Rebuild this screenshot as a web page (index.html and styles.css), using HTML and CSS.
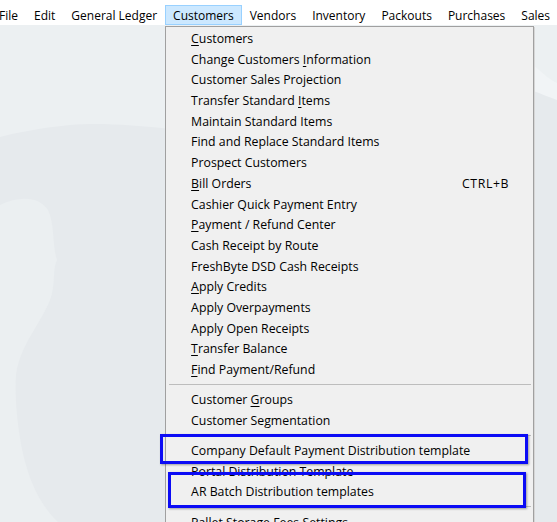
FILE: index.html
```html
<!DOCTYPE html>
<html>
<head>
<meta charset="utf-8">
<link rel="stylesheet" href="styles.css">
</head>
<body>
<div class="app">
  <nav class="menubar">
    <div class="mitem">File</div>
    <div class="mitem">Edit</div>
    <div class="mitem">General Ledger</div>
    <div class="mitem open">Customers
      <div class="dropdown">
        <div class="row"><span><u>C</u>ustomers</span></div>
        <div class="row"><span>Change Customers <u>I</u>nformation</span></div>
        <div class="row"><span>Customer Sales Projection</span></div>
        <div class="row"><span>Transfer Standard <u>I</u>tems</span></div>
        <div class="row"><span>Maintain Standard Items</span></div>
        <div class="row"><span>Find and Replace Standard Items</span></div>
        <div class="row"><span>Prospect Customers</span></div>
        <div class="row"><span><u>B</u>ill Orders</span><span class="key">CTRL+B</span></div>
        <div class="row"><span>Cashier Quick Payment Entry</span></div>
        <div class="row"><span><u>P</u>ayment / Refund Center</span></div>
        <div class="row"><span>Cash Receipt by Route</span></div>
        <div class="row"><span>FreshByte DSD Cash Receipts</span></div>
        <div class="row"><span><u>A</u>pply Credits</span></div>
        <div class="row"><span>Apply Overpayments</span></div>
        <div class="row"><span>Apply Open Receipts</span></div>
        <div class="row"><span><u>T</u>ransfer Balance</span></div>
        <div class="row"><span><u>F</u>ind Payment/Refund</span></div>
        <div class="sep"></div>
        <div class="row"><span>Customer <u>G</u>roups</span></div>
        <div class="row"><span>Customer Segmentation</span></div>
        <div class="sep"></div>
        <div class="row mark-a"><span>Company Default Payment Distribution template</span></div>
        <div class="row"><span>Portal Distribution Template</span></div>
        <div class="row mark-b"><span>AR Batch Distribution templates</span></div>
        <div class="sep"></div>
        <div class="row"><span>Pallet Storage Fees Settings</span></div>
      </div>
    </div>
    <div class="mitem">Vendors</div>
    <div class="mitem">Inventory</div>
    <div class="mitem">Packouts</div>
    <div class="mitem">Purchases</div>
    <div class="mitem">Sales</div>
  </nav>
  <div class="desktop">
    <svg class="art" viewBox="0 0 557 497" preserveAspectRatio="none" xmlns="http://www.w3.org/2000/svg">
      <rect x="0" y="0" width="557" height="497" fill="#e6eaed"/>
      <path d="M0 0 H557 V60 C520 70 490 80 460 90 C400 110 330 120 270 115 C200 108 120 95 70 100 C40 103 15 108 0 112 Z" fill="#ecf0f2"/>
      <path d="M0 180 C20 170 40 172 48 185 C55 200 52 220 57 235 C52 245 56 260 50 275 C40 300 20 320 16 350 C14 380 20 420 26 440 C34 470 50 490 58 497 H0 Z" fill="#ebeff1"/>
      <path d="M533 40 C545 50 550 55 557 58 V75 C548 72 540 68 533 66 Z" fill="#f1f4f6"/>
    </svg>
  </div>
</div>
</body>
</html>
```
FILE: styles.css
```css
html, body {
  margin: 0;
  padding: 0;
}
body {
  width: 557px;
  height: 522px;
  overflow: hidden;
  font-family: "Open Sans", "Noto Sans", sans-serif;
  font-size: 12px;
  color: #000;
  background: #e6eaed;
}
.app {
  display: flex;
  flex-direction: column;
  height: 522px;
}
.menubar {
  display: flex;
  height: 25px;
  padding-top: 5px;
  box-sizing: border-box;
  margin-left: -9px;
  background: #fff;
  position: relative;
  z-index: 2;
  white-space: nowrap;
}
.mitem {
  height: 20px;
  box-sizing: border-box;
  padding: 1px 8px 0 8px;
  line-height: 19px;
}
.mitem.open {
  position: relative;
  background: #cce8ff;
  box-shadow: inset 0 0 0 1px #99d1ff;
}
.dropdown {
  position: absolute;
  top: calc(100% + 1px);
  left: 0;
  width: 369px;
  box-sizing: border-box;
  background: #f0f0f0;
  border: 1px solid #a0a0a0;
  box-shadow: 1px 1px 0 #d6d6d6;
  padding-top: 2px;
  padding-bottom: 4px;
  font-size: 12.3px;
}
.row {
  position: relative;
  display: flex;
  justify-content: space-between;
  height: 20.7px;
  line-height: 20.7px;
  padding: 0 24px 0 25px;
}
.key {
  letter-spacing: 0.6px;
}
.row u {
  text-decoration-thickness: 1px;
  text-underline-offset: 2px;
}
.sep {
  height: 1px;
  background: #bdbdbd;
  margin: 3px 2px 5.5px 3px;
}
.mark-a::after,
.mark-b::after {
  content: "";
  position: absolute;
  border: 3px solid #0b0bf5;
  box-shadow: 1px 1px 2px rgba(0, 0, 0, 0.35);
  pointer-events: none;
}
.mark-a::after {
  top: -7px;
  bottom: -2px;
  left: -6px;
  right: 5px;
}
.mark-b::after {
  top: -10px;
  bottom: -5px;
  left: 2px;
  right: 7px;
}
.desktop {
  flex: 1;
  display: flex;
}
.art {
  width: 100%;
  height: 100%;
  display: block;
}
```
